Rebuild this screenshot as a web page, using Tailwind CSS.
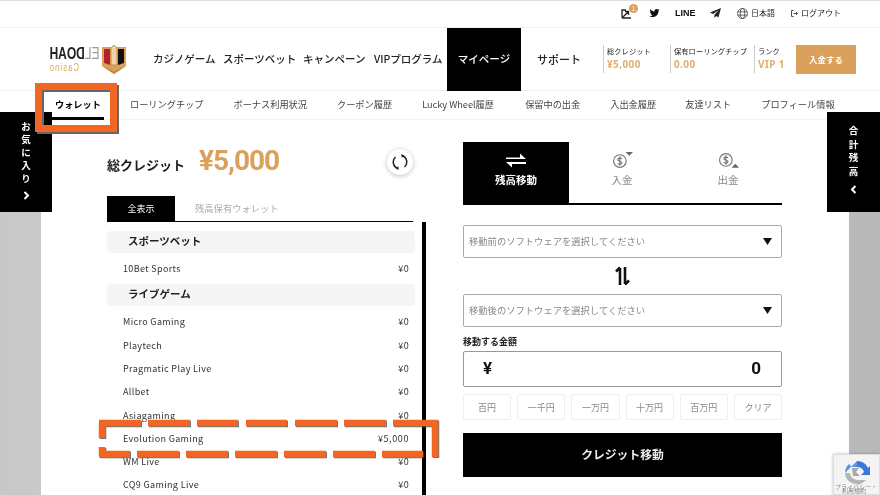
<!DOCTYPE html>
<html lang="ja">
<head>
<meta charset="utf-8">
<script src="https://cdn.jsdelivr.net/npm/@tailwindcss/browser@4"></script>
</head>
<body class="m-0">
<div class="relative w-[880px] h-[495px] overflow-hidden bg-white font-['Noto_Sans_CJK_JP','Noto_Sans',sans-serif] text-[#222] blur-[0.35px]">

  <!-- top bar -->
  <div class="h-[28px] border-t border-t-[#ddd] border-b border-b-[#f1f1f1] flex items-center justify-end pr-[39px] pb-[2px] text-[8.5px] leading-none">
    <div class="relative w-[22px] h-[14px] mr-[6px]">
      <svg class="absolute left-[0px] top-[3px] w-[11px] h-[10px]" viewBox="0 0 11 10" fill="none" stroke="#222" stroke-width="1.3"><path d="M1 9V1h4M1 9h9M2 8l5-5M4 2.5h3.5V6"/></svg>
      <span class="absolute left-[8px] top-[-2px] w-[9px] h-[9px] rounded-full bg-[#d9a15b] text-white text-[6px] leading-[9px] text-center">1</span>
    </div>
    <svg class="w-[11px] h-[10px] mr-[15px]" viewBox="0 0 24 24" fill="#111"><path d="M23.953 4.57a10 10 0 01-2.825.775 4.958 4.958 0 002.163-2.723c-.951.555-2.005.959-3.127 1.184a4.92 4.92 0 00-8.384 4.482C7.69 8.095 4.067 6.13 1.64 3.162a4.822 4.822 0 00-.666 2.475c0 1.71.87 3.213 2.188 4.096a4.904 4.904 0 01-2.228-.616v.06a4.923 4.923 0 003.946 4.827 4.996 4.996 0 01-2.212.085 4.936 4.936 0 004.604 3.417 9.867 9.867 0 01-6.102 2.105c-.39 0-.779-.023-1.17-.067a13.995 13.995 0 007.557 2.209c9.053 0 13.998-7.496 13.998-13.985 0-.21 0-.42-.015-.63A9.935 9.935 0 0024 4.59z"/></svg>
    <span class="w-[20px] mr-[15px] font-bold text-[9px] font-['Liberation_Sans'] text-[#111]">LINE</span>
    <svg class="w-[11px] h-[10px] mr-[16px]" viewBox="0 0 11 10" fill="#222"><path d="M11 0L0 4.6l3 1.3L9 2 4.4 6.7V10l1.8-2 2.2 1.4z"/></svg>
    <svg class="w-[11px] h-[11px] mr-[3px]" viewBox="0 0 12 12" fill="none" stroke="#333" stroke-width=".8"><circle cx="6" cy="6" r="5.4"/><ellipse cx="6" cy="6" rx="2.4" ry="5.4"/><path d="M.8 4.2h10.4M.8 7.8h10.4"/></svg>
    <span class="w-[24px] mr-[16px] text-[8px] whitespace-nowrap">日本語</span>
    <svg class="w-[7px] h-[7px] mr-[3px]" viewBox="0 0 8 8" fill="none" stroke="#333" stroke-width="1"><path d="M3 .6H.6v6.8H3M3 4h4.4M5.6 2.4L7.4 4 5.6 5.6"/></svg>
    <span class="w-[40px] text-[8px] whitespace-nowrap">ログアウト</span>
  </div>

  <!-- header -->
  <div class="h-[63px] flex items-center pl-[48px] border-b border-b-[#f1f1f1]">
    <div class="w-[105px] flex items-center">
      <div class="w-[68px] ml-[-8px] mr-[-6px] scale-x-[-0.75] leading-none font-['Liberation_Sans']">
        <div class="text-[16px] font-bold text-[#222] whitespace-nowrap"><span class="text-[#999] font-normal">EL</span>DOAH</div>
        <div class="text-[10px] text-[#d9a15b] text-right tracking-[1.6px] mt-[1px]">Casino</div>
      </div>
      <svg class="w-[24px] h-[30px] mb-[1px]" viewBox="0 0 24 30"><path d="M0 3h24v19l-12 8L0 22z" fill="#d9a15b"/><path d="M2 5h6v16l-6-2z" fill="#b3222a"/><path d="M16 5h6v14l-6 2z" fill="#111"/><path d="M9 21V4l3-3 3 3v17z" fill="#efd3a5" stroke="#a97a35" stroke-width=".7"/><path d="M0 22l12 5 12-5-12 8z" fill="#c58b45"/></svg>
    </div>
    <nav class="flex items-stretch h-[63px] text-[10.5px] whitespace-nowrap text-[#222] font-medium">
      <a class="flex items-center w-[70px]">カジノゲーム</a>
      <a class="flex items-center w-[80px]">スポーツベット</a>
      <a class="flex items-center w-[71px]">キャンペーン</a>
      <a class="flex items-center w-[73px]">VIPプログラム</a>
      <a class="flex items-center justify-center w-[74px] bg-black text-white">マイページ</a>
      <a class="flex items-center w-[82px] pl-[16px] text-[11px]">サポート</a>
    </nav>
    <div class="h-[28px] w-[67px] border-l border-l-[#ccc] pl-[3px] leading-none">
      <div class="text-[7.3px] mt-[3px] whitespace-nowrap">総クレジット</div>
      <div class="text-[10px] mt-[4px] font-bold text-[#e0ae70] font-['Noto_Sans'] tracking-[0.4px]">¥5,000</div>
    </div>
    <div class="h-[28px] w-[84px] border-l border-l-[#ccc] pl-[3px] leading-none">
      <div class="text-[7.3px] mt-[3px] whitespace-nowrap">保有ローリングチップ</div>
      <div class="text-[10px] mt-[4px] font-bold text-[#e0ae70] font-['Noto_Sans'] tracking-[0.4px]">0.00</div>
    </div>
    <div class="h-[28px] w-[42px] border-l border-l-[#ccc] pl-[3px] leading-none">
      <div class="text-[7.3px] mt-[3px] whitespace-nowrap">ランク</div>
      <div class="text-[10px] mt-[4px] font-bold text-[#e0ae70] font-['Noto_Sans'] tracking-[0.4px] whitespace-nowrap">VIP 1</div>
    </div>
    <a class="w-[60px] h-[29px] bg-[#d9a15b] text-white text-[8.5px] font-bold flex items-center justify-center">入金する</a>
  </div>

  <!-- sub nav -->
  <div class="h-[29px] flex items-center pl-[55px] border-b border-b-[#f3f3f3] text-[9.2px] text-[#444] whitespace-nowrap gap-[30px] leading-none">
    <a class="relative w-[45px] text-black font-bold">ウォレット<span class="absolute left-[-3px] top-[17px] w-[52px] h-[3px] bg-black"></span></a>
    <a>ローリングチップ</a>
    <a>ボーナス利用状況</a>
    <a>クーポン履歴</a>
    <a class="w-[73px]">Lucky Wheel履歴</a>
    <a>保留中の出金</a>
    <a class="w-[45px]">入出金履歴</a>
    <a class="w-[46px]">友達リスト</a>
    <a>プロフィール情報</a>
  </div>

  <!-- main -->
  <div class="h-[375px] flex bg-gradient-to-r from-[#c8c8c8] via-[#d0d0d0] to-[#b8b8b8]">
    <div class="ml-[41px] w-[808px] h-full bg-white flex pl-[66px]">
      <!-- left column -->
      <div class="w-[308px] shrink-0 relative">
        <div class="h-[76px] relative">
          <span class="absolute left-0 top-[35px] text-[13px] leading-[20px] font-bold whitespace-nowrap">総クレジット</span>
          <span class="absolute left-[92px] top-[22px] text-[28px] leading-[38px] font-bold text-[#d9a15b] font-['Roboto'] tracking-[-1px]">¥5,000</span>
          <div class="absolute left-[280px] top-[29px] w-[26px] h-[26px] rounded-full bg-white shadow-[0_1px_5px_rgba(0,0,0,0.25)] flex items-center justify-center">
            <svg class="w-[16px] h-[16px]" viewBox="0 0 16 16" fill="none" stroke="#222" stroke-width="1.5"><path d="M10 1.500A6.800 6.800 0 0 1 12.500 13"/><path d="M6 14.500A6.800 6.800 0 0 1 3.500 3"/><path d="M9.300 0l3 1.700-2.600 2.100zM6.700 16l-3-1.700 2.600-2.100z" fill="#222" stroke="none"/></svg>
          </div>
        </div>
        <div class="w-[306px] h-[26px] border-b-[1.5px] border-b-black flex text-[9px] leading-none">
          <a class="w-[68px] bg-black text-white flex items-center justify-center">全表示</a>
          <a class="ml-[20px] flex items-center text-[#aaa] text-[9.300px] whitespace-nowrap">残高保有ウォレット</a>
        </div>
        <div class="mt-[9px]">
          <div class="h-[22px] bg-[#f5f5f5] rounded-[4px] pl-[21px] text-[10.5px] leading-[19px] font-bold">スポーツベット</div>
          <div class="h-[31px] pl-[16px] pr-[6px] flex items-center justify-between text-[9px] tracking-[0.35px] text-[#333]"><span>10Bet Sports</span><span>¥0</span></div>
          <div class="h-[22px] bg-[#f5f5f5] rounded-[4px] pl-[21px] text-[10.5px] leading-[20px] font-bold">ライブゲーム</div>
          <div class="pt-[4.5px] pl-[16px] pr-[6px] text-[9px] tracking-[0.35px] text-[#333]">
            <div class="h-[23.3px] flex items-center justify-between"><span>Micro Gaming</span><span>¥0</span></div>
            <div class="h-[23.3px] flex items-center justify-between"><span>Playtech</span><span>¥0</span></div>
            <div class="h-[23.3px] flex items-center justify-between"><span>Pragmatic Play Live</span><span>¥0</span></div>
            <div class="h-[23.3px] flex items-center justify-between"><span>Allbet</span><span>¥0</span></div>
            <div class="h-[23.3px] flex items-center justify-between"><span>Asiagaming</span><span>¥0</span></div>
            <div class="h-[23.3px] flex items-center justify-between"><span>Evolution Gaming</span><span class="tracking-[0.6px]">¥5,000</span></div>
            <div class="h-[23.3px] flex items-center justify-between"><span>WM Live</span><span>¥0</span></div>
            <div class="h-[23.3px] flex items-center justify-between"><span>CQ9 Gaming Live</span><span>¥0</span></div>
          </div>
        </div>
      </div>
      <!-- scrollbar -->
      <div class="ml-[7px] mt-[102px] w-[4px] h-[273px] bg-black shrink-0"></div>
      <!-- right column -->
      <div class="ml-[37px] w-[319px] shrink-0">
        <div class="mt-[22px] h-[63px] border-b-2 border-b-black flex text-[10.5px] leading-none text-[#888]">
          <a class="w-[106px] bg-black text-white font-bold flex flex-col items-center">
            <svg class="w-[20px] h-[15px] mt-[11px]" viewBox="0 0 20 14" fill="#fff"><path d="M0 4h14V0l6 5.500H0zM20 8.500H0L6 14v-3.500h14z"/></svg>
            <span class="mt-[7px]">残高移動</span>
          </a>
          <a class="w-[106px] flex flex-col items-center">
            <svg class="w-[21px] h-[17px] mt-[10px]" viewBox="0 0 20 16" fill="none" stroke="#777" stroke-width="1.100"><circle cx="7.500" cy="8.500" r="6"/><path d="M9.500 6.500c-.6-1-4-1.200-4 .7 0 1.900 4 1 4 3 0 1.800-3.500 1.500-4.200.5M7.500 4v9"/><path d="M13 0h7l-3.500 3.500z" fill="#666" stroke="none"/></svg>
            <span class="mt-[6px]">入金</span>
          </a>
          <a class="w-[106px] flex flex-col items-center">
            <svg class="w-[21px] h-[17px] mt-[10px]" viewBox="0 0 20 16" fill="none" stroke="#777" stroke-width="1.100"><circle cx="7.500" cy="7.500" r="6"/><path d="M9.500 5.500c-.6-1-4-1.200-4 .7 0 1.900 4 1 4 3 0 1.800-3.500 1.500-4.200.5M7.500 3v9"/><path d="M13 15h7l-3.500-4z" fill="#666" stroke="none"/></svg>
            <span class="mt-[6px]">出金</span>
          </a>
        </div>
        <div class="mt-[20px] h-[33px] border border-[#aaa] rounded-[2px] flex items-center justify-between pl-[5px] pr-[9px] text-[9.3px] text-[#888] whitespace-nowrap">
          <span>移動前のソフトウェアを選択してください</span>
          <svg class="w-[9px] h-[7px]" viewBox="0 0 9 7" fill="#111"><path d="M0 0h9L4.500 7z"/></svg>
        </div>
        <div class="h-[36px] flex items-center justify-center">
          <svg class="w-[17px] h-[22px] mr-[1px]" viewBox="0 0 17 22" fill="none" stroke="#111" stroke-width="2.600"><path d="M6 20V3M2 6.500L6 2.500"/><path d="M11 2v17M15 15.500l-4 4"/></svg>
        </div>
        <div class="h-[33px] border border-[#aaa] rounded-[2px] flex items-center justify-between pl-[5px] pr-[9px] text-[9.3px] text-[#888] whitespace-nowrap">
          <span>移動後のソフトウェアを選択してください</span>
          <svg class="w-[9px] h-[7px]" viewBox="0 0 9 7" fill="#111"><path d="M0 0h9L4.500 7z"/></svg>
        </div>
        <div class="mt-[8px] h-[16px] text-[9px] leading-[13px] font-bold">移動する金額</div>
        <div class="h-[36px] border border-[#999] rounded-[2px] flex items-center justify-between pl-[19px] pr-[20px] font-bold text-[17px] font-['Roboto'] text-[#111]">
          <span>¥</span><span>0</span>
        </div>
        <div class="mt-[7px] h-[26px] grid grid-cols-6 gap-[6px] text-[9px] text-[#888] leading-none">
          <a class="border border-[#eee] rounded-[2px] flex items-center justify-center">百円</a>
          <a class="border border-[#eee] rounded-[2px] flex items-center justify-center">一千円</a>
          <a class="border border-[#eee] rounded-[2px] flex items-center justify-center">一万円</a>
          <a class="border border-[#eee] rounded-[2px] flex items-center justify-center">十万円</a>
          <a class="border border-[#eee] rounded-[2px] flex items-center justify-center">百万円</a>
          <a class="border border-[#eee] rounded-[2px] flex items-center justify-center">クリア</a>
        </div>
        <a class="mt-[13px] h-[44px] pb-[3px] bg-black text-[#eee] text-[11.8px] font-bold flex items-center justify-center">クレジット移動</a>
      </div>
    </div>
  </div>

  <!-- side tabs -->
  <div class="absolute left-0 top-[112px] w-[52px] h-[100px] bg-black text-white text-[9.500px] font-bold flex flex-col items-center pt-[8px] gap-[0px]">
    <span class="h-[13px] leading-[13px]">お</span><span class="h-[13px] leading-[13px]">気</span><span class="h-[13px] leading-[13px]">に</span><span class="h-[13px] leading-[13px]">入</span><span class="h-[13px] leading-[13px]">り</span>
    <svg class="w-[7px] h-[9px] mt-[6px]" viewBox="0 0 7 9" fill="none" stroke="#fff" stroke-width="2"><path d="M1.500 1l3.500 3.500L1.500 8"/></svg>
  </div>
  <div class="absolute left-[827px] top-[112px] w-[53px] h-[100px] bg-black text-white text-[9.500px] font-bold leading-[13.700px] flex flex-col items-center pt-[12px]">
    <span>合</span><span>計</span><span>残</span><span>高</span>
    <svg class="w-[7px] h-[9px] mt-[6px]" viewBox="0 0 7 9" fill="none" stroke="#fff" stroke-width="2"><path d="M5.500 1L2 4.500 5.500 8"/></svg>
  </div>

  <!-- orange highlight on the wallet tab -->
  <div class="absolute left-[35px] top-[83px] w-[82px] h-[49px] border-[7.5px] border-[#f26522] shadow-[2px_2px_0_#666,inset_2px_2px_0_#666]"></div>

  <!-- orange dashed highlight -->
  <svg class="absolute left-0 top-0 w-[880px] h-[495px] drop-shadow-[1.5px_1.5px_0_rgba(70,70,70,0.75)] pointer-events-none" viewBox="0 0 880 495" fill="none" stroke="#f26522" stroke-width="6.500">
    <path d="M102 438V423M99 423H141M148 423H190M197 423H238M246 423H287M295 423H337M344 423H386M393 423H435V457M423 454H382M375 454H333M326 454H284M277 454H235M228 454H186M179 454H137M130 454H99M102 456V447"/>
  </svg>

  <!-- recaptcha -->
  <div class="absolute left-[833px] top-[454px] w-[47px] h-[41px] bg-[#f4f4f4] border border-[#ddd] shadow-[0_0_3px_rgba(0,0,0,0.25)] overflow-hidden">
    <svg class="absolute left-[10px] top-[5px] w-[26px] h-[26px]" viewBox="0 0 26 26" fill="none">
      <path d="M13 1a12 12 0 0 1 11 7l2-2v9h-9l3-3a7.500 7.500 0 0 0-7-5z" fill="#3b78d8"/>
      <path d="M1 13a12 12 0 0 1 4-9l3 3h5v-6z" fill="#5b95e8"/>
      <path d="M1 13h5a7.500 7.500 0 0 0 7 7h9a12 12 0 0 1-21-7z" fill="#b5b5b5"/>
      <path d="M8 8h7l-3 4 4 4H9z" fill="#a9a9a9"/>
    </svg>
    <div class="absolute left-[1px] top-[30px] text-[6px] leading-[4px] text-[#888] whitespace-nowrap">プライバシー・<br><span class="ml-[7px]">利用規約</span></div>
  </div>
</div>
</body>
</html>
